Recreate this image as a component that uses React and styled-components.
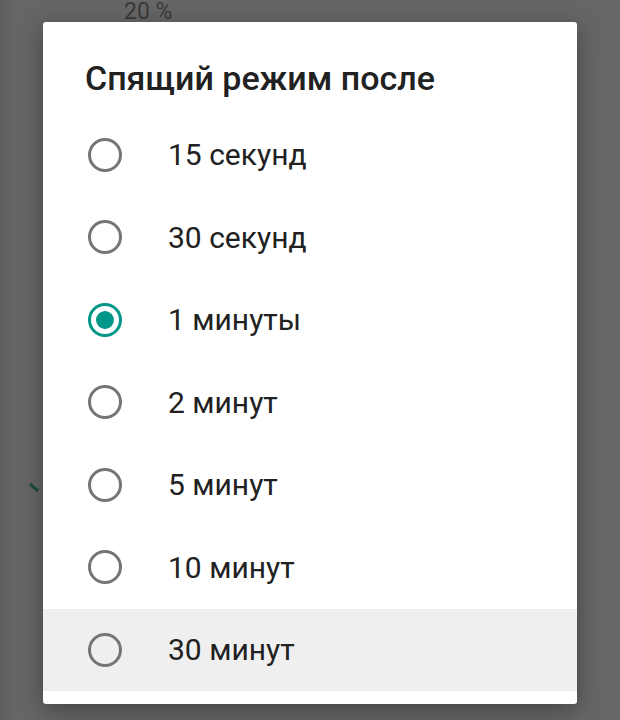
import React from "react";
import styled, { createGlobalStyle } from "styled-components";

const GlobalStyle = createGlobalStyle`
  body {
    margin: 0;
    background: #666666;
    font-family: Roboto, "Noto Sans", sans-serif;
  }
`;

const Screen = styled.div`
  position: relative;
  width: 620px;
  height: 720px;
  overflow: hidden;
  background: linear-gradient(90deg, #5c5c5c 0px, #666666 12px, #666666 100%);
  padding-top: 22px;
  box-sizing: border-box;
`;

const BehindText = styled.span`
  position: absolute;
  top: 0;
  left: 124px;
  font-size: 23px;
  line-height: 24px;
  color: #3a3a3a;
`;

const BehindCheck = styled.svg`
  position: absolute;
  left: 28px;
  top: 480px;
`;

const Dialog = styled.div`
  position: relative;
  margin-left: 43px;
  width: 534px;
  background: #ffffff;
  border-radius: 3px;
  box-shadow: 0 6px 24px rgba(0, 0, 0, 0.35);
  padding: 36px 0 13px;
  box-sizing: border-box;
`;

const Title = styled.h2`
  margin: 0 0 15.5px;
  padding-left: 42px;
  font-size: 34px;
  line-height: 40px;
  font-weight: 500;
  color: #212121;
`;

const Option = styled.div`
  display: flex;
  align-items: center;
  height: 82.5px;
  padding-left: 45px;
  background: ${(p) => (p.$pressed ? "#efefef" : "transparent")};
`;

const Radio = styled.span`
  width: 34px;
  height: 34px;
  box-sizing: border-box;
  border-radius: 50%;
  border: 3px solid ${(p) => (p.$checked ? "#009688" : "#757575")};
  display: flex;
  align-items: center;
  justify-content: center;
  flex-shrink: 0;

  &::after {
    content: "";
    width: 18px;
    height: 18px;
    border-radius: 50%;
    background: #009688;
    display: ${(p) => (p.$checked ? "block" : "none")};
  }
`;

const Label = styled.span`
  margin-left: 46px;
  font-size: 30px;
  color: #212121;
`;

const options = [
  "15 секунд",
  "30 секунд",
  "1 минуты",
  "2 минут",
  "5 минут",
  "10 минут",
  "30 минут",
];

export default function App() {
  return (
    <>
      <GlobalStyle />
      <Screen>
        <BehindText>20 %</BehindText>
        <BehindCheck width="16" height="14" viewBox="0 0 16 14">
          <path d="M2 4 L10 11" stroke="#1e4a44" strokeWidth="3" fill="none" />
        </BehindCheck>
        <Dialog>
          <Title>Спящий режим после</Title>
          {options.map((o, i) => (
            <Option key={o} $pressed={i === 6}>
              <Radio $checked={i === 2} />
              <Label>{o}</Label>
            </Option>
          ))}
        </Dialog>
      </Screen>
    </>
  );
}
